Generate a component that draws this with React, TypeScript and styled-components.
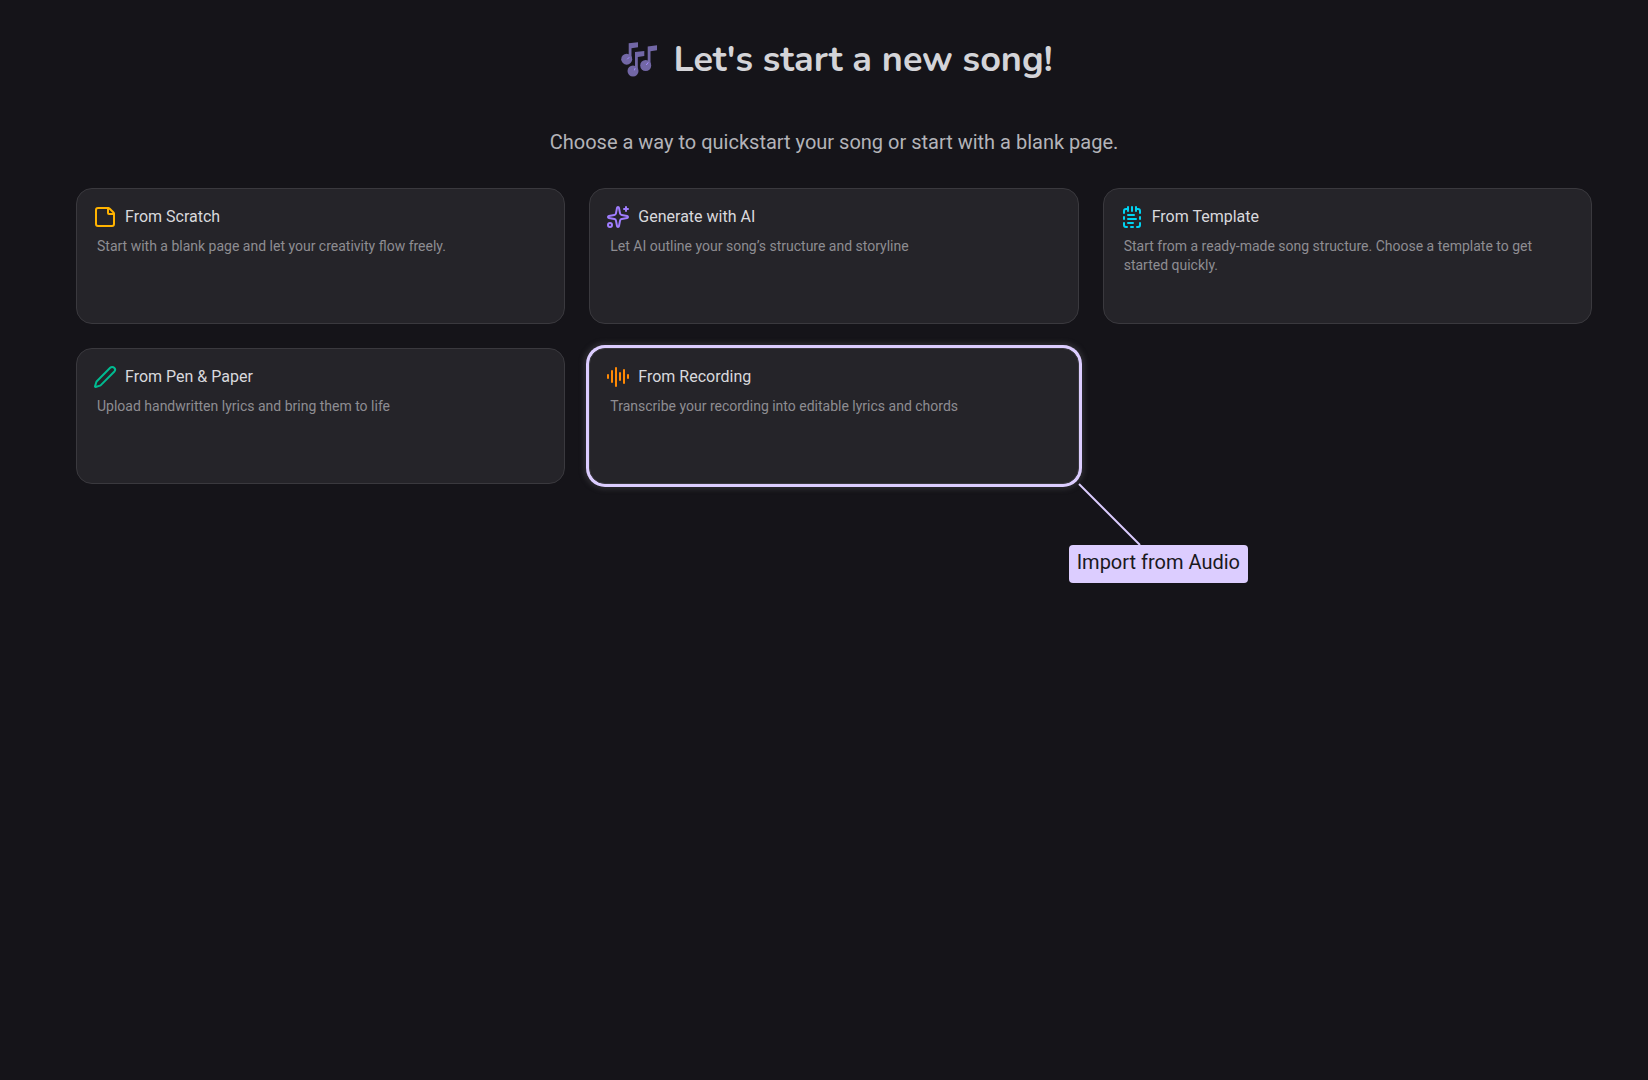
import React from "react";
import styled, { createGlobalStyle } from "styled-components";
import { AudioLines, NotepadTextDashed, Pen, Sparkles, StickyNote, type LucideIcon } from "lucide-react";

const GlobalStyle = createGlobalStyle`
  *, *::before, *::after { box-sizing: border-box; }
  body {
    margin: 0;
    min-height: 100vh;
    background: #151419;
    font-family: Roboto, "Liberation Sans", sans-serif;
  }
`;

const Page = styled.main`
  padding: 34px 56px 32px 76px;
`;

const Header = styled.header`
  display: flex;
  flex-direction: column;
  align-items: center;
  text-align: center;
`;

const TitleRow = styled.div`
  display: flex;
  align-items: center;
  gap: 16px;
  margin-bottom: 42px;
  padding-left: 6px;
`;

const Title = styled.h1`
  margin: 0;
  color: #d4d4d8;
  font-family: Nunito, Lato, sans-serif;
  font-size: 36px;
  font-weight: 700;
  line-height: 52px;
`;

const Subtitle = styled.p`
  margin: 0 0 32px;
  color: #b3b3b8;
  font-size: 20px;
  font-weight: 400;
  line-height: 28px;
`;

const Grid = styled.div`
  display: grid;
  grid-template-columns: repeat(3, minmax(0, 1fr));
  gap: 24px;
`;

const Cell = styled.div`
  position: relative;
  display: flex;
`;

const Card = styled.button<{ $highlighted?: boolean }>`
  flex: 1;
  display: flex;
  flex-direction: column;
  gap: 8px;
  min-height: 136px;
  padding: 16px;
  border: 1px solid #3a393e;
  border-radius: 16px;
  background: #252429;
  font-family: inherit;
  text-align: left;
  cursor: pointer;
  box-shadow: ${(p) => (p.$highlighted ? "0 0 0 3px #dccdff, 0 0 4px 6px #29282d" : "none")};
`;

const CardHeading = styled.span`
  display: flex;
  align-items: center;
  gap: 8px;
  color: #d9d9dd;
  font-size: 16px;
  line-height: 24px;
`;

const CardText = styled.span`
  padding: 0 4px;
  color: #8e8d92;
  font-size: 14px;
  line-height: 19px;
`;

const Callout = styled.div`
  position: absolute;
  top: 100%;
  left: 100%;
`;

const Connector = styled.svg`
  position: absolute;
  top: 0;
  left: 0;
  overflow: visible;
`;

const Label = styled.div`
  position: absolute;
  top: 61px;
  left: -10px;
  padding: 3px 8px 7px;
  border-radius: 4px;
  background: #dccdff;
  color: #1a191d;
  font-size: 20px;
  line-height: 28px;
  white-space: nowrap;
`;

const MusicNotes = () => (
  <svg width="36" height="36" viewBox="0 0 36 36" aria-hidden="true">
    <g fill="#7267a6">
      <circle cx="5.7" cy="17.2" r="5.5" />
      <path d="M7.700 18V1.200L17 .3v5l-6.500 1V18z" />
      <circle cx="12" cy="29" r="5.500" />
      <path d="M14 29.500V10l9.300-1v5l-6.500 1V29.500z" />
      <circle cx="24.700" cy="23.500" r="5.500" />
      <path d="M26.700 24V4.500L36 3.300v5l-6.500 1V24z" />
    </g>
    <path d="M6.500 17l1.500-1.500M13.500 28l.5-1.500M25.500 22.700l1.500-2" stroke="#a58cff" strokeLinecap="round" />
  </svg>
);

type Option = { title: string; text: string; icon: LucideIcon; color: string; callout?: string };

const options: Option[] = [
  { title: "From Scratch", text: "Start with a blank page and let your creativity flow freely.", icon: StickyNote, color: "#ffb300" },
  { title: "Generate with AI", text: "Let AI outline your song’s structure and storyline", icon: Sparkles, color: "#a07dff" },
  { title: "From Template", text: "Start from a ready-made song structure. Choose a template to get started quickly.", icon: NotepadTextDashed, color: "#00d3f2" },
  { title: "From Pen & Paper", text: "Upload handwritten lyrics and bring them to life", icon: Pen, color: "#00bb91" },
  { title: "From Recording", text: "Transcribe your recording into editable lyrics and chords", icon: AudioLines, color: "#ff8904", callout: "Import from Audio" },
];

export default function App() {
  return (
    <>
      <GlobalStyle />
      <Page>
        <Header>
          <TitleRow>
            <MusicNotes />
            <Title>Let's start a new song!</Title>
          </TitleRow>
          <Subtitle>Choose a way to quickstart your song or start with a blank page.</Subtitle>
        </Header>
        <Grid>
          {options.map(({ title, text, icon: Icon, color, callout }) => (
            <Cell key={title}>
              <Card type="button" $highlighted={Boolean(callout)}>
                <CardHeading>
                  <Icon size={24} color={color} />
                  {title}
                </CardHeading>
                <CardText>{text}</CardText>
              </Card>
              {callout && (
                <Callout>
                  <Connector width="62" height="62" viewBox="0 0 62 62" aria-hidden="true">
                    <path d="M0 0L61 61" stroke="#dccdff" strokeWidth="2" />
                  </Connector>
                  <Label>{callout}</Label>
                </Callout>
              )}
            </Cell>
          ))}
        </Grid>
      </Page>
    </>
  );
}
